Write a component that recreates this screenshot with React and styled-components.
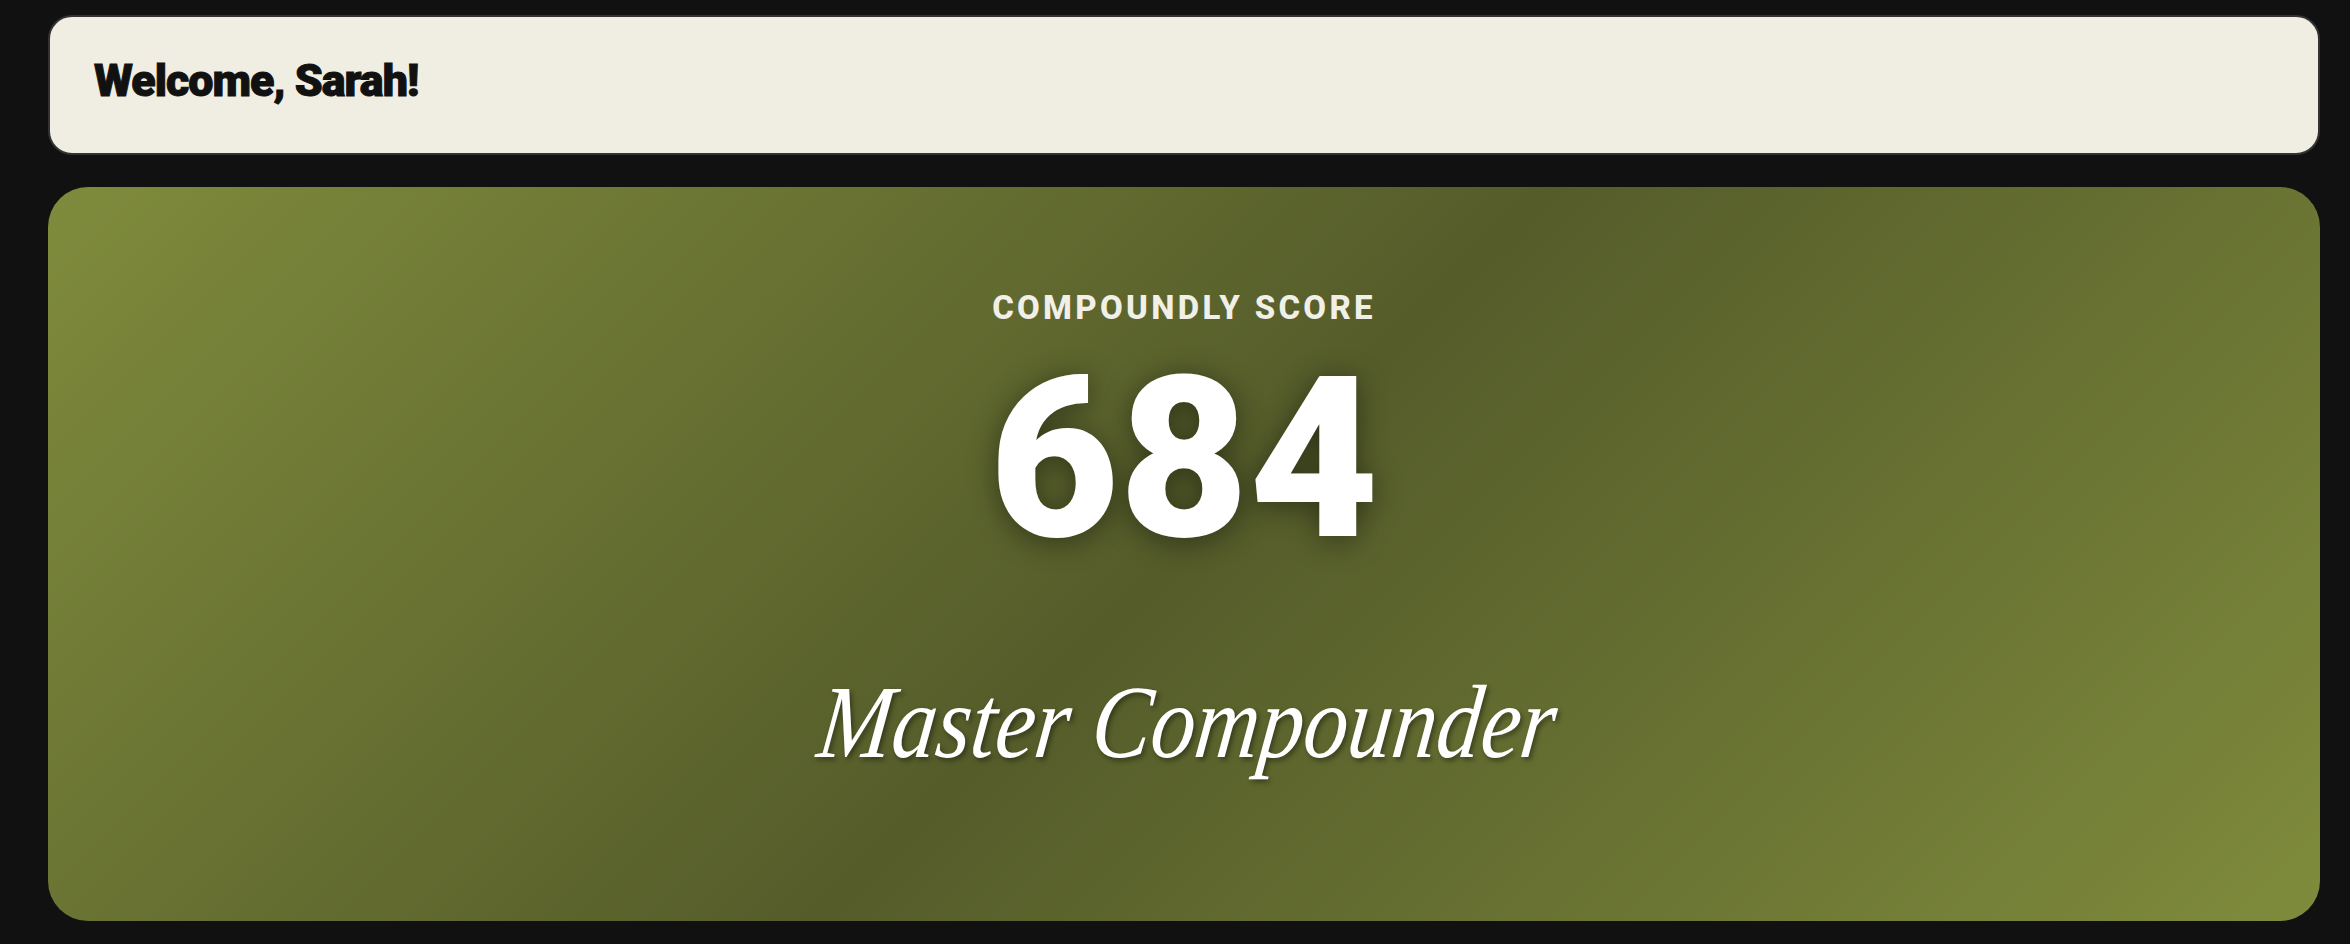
import React from 'react';
import styled, { createGlobalStyle } from 'styled-components';

const GlobalStyle = createGlobalStyle`
  html, body {
    margin: 0;
    padding: 0;
    background: #111111;
    font-family: Roboto, "Liberation Sans", sans-serif;
  }
`;

const Page = styled.div`
  box-sizing: border-box;
  display: flex;
  flex-direction: column;
  gap: 32px;
  min-height: 100vh;
  padding: 15px 30px 23px 48px;
`;

const WelcomeCard = styled.header`
  box-sizing: border-box;
  height: 140px;
  padding: 38px 44px;
  background: #f0eee2;
  border: 2px solid #333333;
  border-radius: 24px;
`;

const Greeting = styled.h1`
  margin: 0;
  color: #111111;
  font-size: 44.8px;
  font-weight: 900;
  line-height: 52px;
  letter-spacing: -1px;
  -webkit-text-stroke: 1px #111111;
`;

const ScoreCard = styled.section`
  flex: 1;
  display: flex;
  flex-direction: column;
  align-items: center;
  padding-top: 99px;
  background: linear-gradient(135deg, #7f8b3c 0%, #555c2a 50%, #7f8b3c 100%);
  border-radius: 40px;
`;

const ScoreLabel = styled.div`
  color: #f0efe8;
  font-size: 33px;
  font-weight: 800;
  line-height: 44px;
  letter-spacing: 3.3px;
`;

const ScoreValue = styled.div`
  color: #ffffff;
  font-size: 224px;
  font-weight: 900;
  line-height: 260px;
  text-shadow: 0 4px 30px rgba(0, 0, 0, 0.45);
`;

const ScoreTitle = styled.div`
  margin: 62px 0 0 8px;
  color: #ffffff;
  font-family: "Liberation Serif", serif;
  font-size: 104px;
  font-style: italic;
  line-height: 140px;
  white-space: nowrap;
  text-shadow: 3px 3px 6px rgba(0, 0, 0, 0.4);
  transform: scaleX(0.853) skewX(-8deg);
`;

const App = () => {
  return (
    <>
      <GlobalStyle />
      <Page>
        <WelcomeCard>
          <Greeting>Welcome, Sarah!</Greeting>
        </WelcomeCard>
        <ScoreCard>
          <ScoreLabel>COMPOUNDLY SCORE</ScoreLabel>
          <ScoreValue>684</ScoreValue>
          <ScoreTitle>Master Compounder</ScoreTitle>
        </ScoreCard>
      </Page>
    </>
  );
};

export default App;
